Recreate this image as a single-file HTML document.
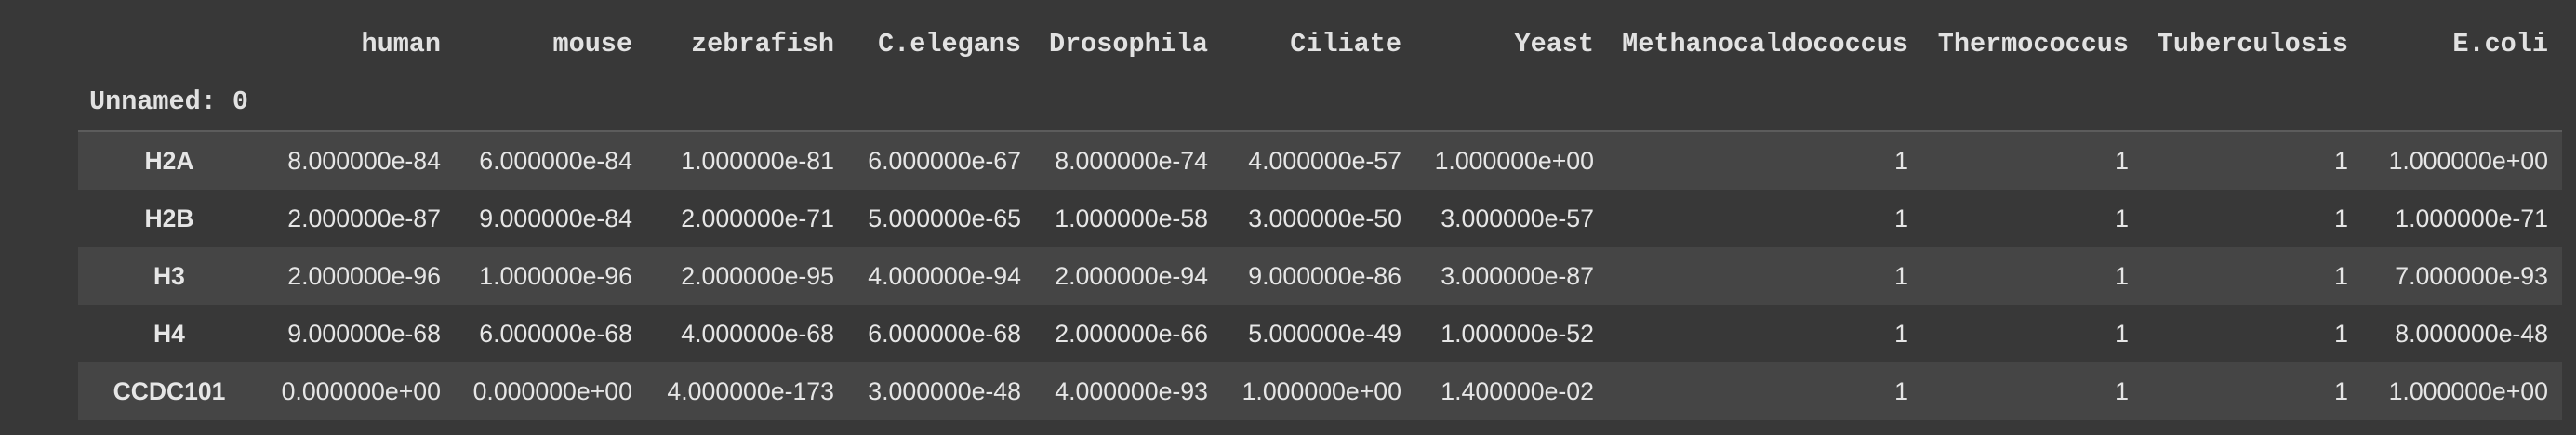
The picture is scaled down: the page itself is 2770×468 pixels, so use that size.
<!DOCTYPE html>
<html><head><meta charset="utf-8"><style>
html,body{margin:0;padding:0}
body{width:2770px;height:468px;background:#383838;position:relative;overflow:hidden;font-family:"Liberation Sans",Arial,sans-serif}
.h{position:absolute;top:30px;font-family:"Liberation Mono",monospace;font-weight:bold;font-size:28.5px;color:#e2e2e2;white-space:nowrap;line-height:36px}
.row{position:absolute;left:84px;width:2671px;height:62px}
.c{position:absolute;font-size:26.7px;color:#e6e6e6;white-space:nowrap;line-height:62px}
.ix{position:absolute;font-weight:bold;font-size:26.5px;color:#e6e6e6;line-height:62px;width:200px;text-align:center;left:82px}
</style></head><body>
<div class="h" style="left:96px;top:92px">Unnamed: 0</div>
<div style="position:absolute;left:84px;top:140px;width:2671px;height:2px;background:#5c5c5c"></div>
<div class="h" style="right:2296px">human</div>
<div class="h" style="right:2090px">mouse</div>
<div class="h" style="right:1873px">zebrafish</div>
<div class="h" style="right:1672px">C.elegans</div>
<div class="h" style="right:1471px">Drosophila</div>
<div class="h" style="right:1263px">Ciliate</div>
<div class="h" style="right:1056px">Yeast</div>
<div class="h" style="right:718px">Methanocaldococcus</div>
<div class="h" style="right:481px">Thermococcus</div>
<div class="h" style="right:245px">Tuberculosis</div>
<div class="h" style="right:30px">E.coli</div>

<div class="row" style="top:142px;background:#454545"></div>
<div class="row" style="top:204px;background:#383838"></div>
<div class="row" style="top:266px;background:#454545"></div>
<div class="row" style="top:328px;background:#383838"></div>
<div class="row" style="top:390px;background:#454545"></div>

<div style="position:absolute;top:142px;left:0;width:2770px;height:62px">
<div class="ix">H2A</div>
<div class="c" style="right:2296px">8.000000e-84</div><div class="c" style="right:2090px">6.000000e-84</div><div class="c" style="right:1873px">1.000000e-81</div><div class="c" style="right:1672px">6.000000e-67</div><div class="c" style="right:1471px">8.000000e-74</div><div class="c" style="right:1263px">4.000000e-57</div><div class="c" style="right:1056px">1.000000e+00</div><div class="c" style="right:718px">1</div><div class="c" style="right:481px">1</div><div class="c" style="right:245px">1</div><div class="c" style="right:30px">1.000000e+00</div>
</div>
<div style="position:absolute;top:204px;left:0;width:2770px;height:62px">
<div class="ix">H2B</div>
<div class="c" style="right:2296px">2.000000e-87</div><div class="c" style="right:2090px">9.000000e-84</div><div class="c" style="right:1873px">2.000000e-71</div><div class="c" style="right:1672px">5.000000e-65</div><div class="c" style="right:1471px">1.000000e-58</div><div class="c" style="right:1263px">3.000000e-50</div><div class="c" style="right:1056px">3.000000e-57</div><div class="c" style="right:718px">1</div><div class="c" style="right:481px">1</div><div class="c" style="right:245px">1</div><div class="c" style="right:30px">1.000000e-71</div>
</div>
<div style="position:absolute;top:266px;left:0;width:2770px;height:62px">
<div class="ix">H3</div>
<div class="c" style="right:2296px">2.000000e-96</div><div class="c" style="right:2090px">1.000000e-96</div><div class="c" style="right:1873px">2.000000e-95</div><div class="c" style="right:1672px">4.000000e-94</div><div class="c" style="right:1471px">2.000000e-94</div><div class="c" style="right:1263px">9.000000e-86</div><div class="c" style="right:1056px">3.000000e-87</div><div class="c" style="right:718px">1</div><div class="c" style="right:481px">1</div><div class="c" style="right:245px">1</div><div class="c" style="right:30px">7.000000e-93</div>
</div>
<div style="position:absolute;top:328px;left:0;width:2770px;height:62px">
<div class="ix">H4</div>
<div class="c" style="right:2296px">9.000000e-68</div><div class="c" style="right:2090px">6.000000e-68</div><div class="c" style="right:1873px">4.000000e-68</div><div class="c" style="right:1672px">6.000000e-68</div><div class="c" style="right:1471px">2.000000e-66</div><div class="c" style="right:1263px">5.000000e-49</div><div class="c" style="right:1056px">1.000000e-52</div><div class="c" style="right:718px">1</div><div class="c" style="right:481px">1</div><div class="c" style="right:245px">1</div><div class="c" style="right:30px">8.000000e-48</div>
</div>
<div style="position:absolute;top:390px;left:0;width:2770px;height:62px">
<div class="ix">CCDC101</div>
<div class="c" style="right:2296px">0.000000e+00</div><div class="c" style="right:2090px">0.000000e+00</div><div class="c" style="right:1873px">4.000000e-173</div><div class="c" style="right:1672px">3.000000e-48</div><div class="c" style="right:1471px">4.000000e-93</div><div class="c" style="right:1263px">1.000000e+00</div><div class="c" style="right:1056px">1.400000e-02</div><div class="c" style="right:718px">1</div><div class="c" style="right:481px">1</div><div class="c" style="right:245px">1</div><div class="c" style="right:30px">1.000000e+00</div>
</div>
</body></html>
